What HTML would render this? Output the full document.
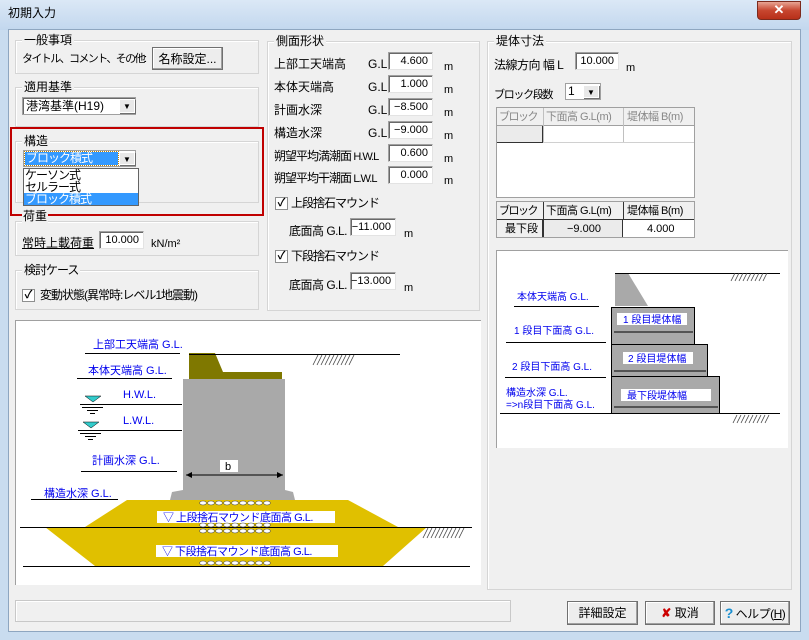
<!DOCTYPE html>
<html><head><meta charset="utf-8"><style>
*{box-sizing:border-box;margin:0;padding:0}
body{width:809px;height:640px;overflow:hidden;background:#c9dcef;font-family:"Liberation Sans","Noto Sans CJK JP",sans-serif;font-size:12px;color:#000;position:relative}
.a{position:absolute}
.t{position:absolute;white-space:nowrap;line-height:14px}
.n{letter-spacing:-1px}
.grp{position:absolute;border:1px solid #d5d5d5;box-shadow:inset 1px 1px 0 #fff}
.gl{position:absolute;top:-8px;left:6px;background:#f0f0f0;padding:0 2px;line-height:14px}
.inp{position:absolute;background:#fff;border:1px solid #a0a0a0;border-right-color:#e3e3e3;border-bottom-color:#e3e3e3;box-shadow:inset 1px 1px 0 #696969;text-align:right;padding-right:4px;line-height:16px;font-size:11px}
.btn{position:absolute;background:#ededed;border:1px solid #707070;box-shadow:inset -1px -1px 0 #a0a0a0,inset 1px 1px 0 #fff;text-align:center;line-height:22px}
.cb{position:absolute;width:13px;height:13px;background:#fff;border:1px solid #8e8f8f;font-size:11px;line-height:11px;text-align:center;font-weight:bold}
.dd{position:absolute;width:16px;background:#e8e8e8;border:1px solid #fff;box-shadow:1px 1px 0 #707070;text-align:center;font-size:8px}
.th{font-size:11px;letter-spacing:-0.5px}
</style></head><body>
<div class="a" style="left:0;top:0;width:809px;height:30px;background:linear-gradient(#dbe8f6,#c2d7ee)"></div>
<div class="t" style="left:8px;top:6px;font-size:12px">初期入力</div>
<div class="a" style="left:757px;top:1px;width:44px;height:19px;border-radius:0 0 4px 4px;background:linear-gradient(#e8a493,#c7462f 50%,#b83019);border:1px solid #7c2a1d;color:#fff;text-align:center;font-weight:bold;font-size:13px;line-height:16px">✕</div>
<div class="a" style="left:8px;top:29px;width:793px;height:603px;background:#f0f0f0;border:1px solid #8ea6c0"></div>

<div class="grp" style="left:15px;top:40px;width:244px;height:34px"><div class="gl">一般事項</div></div>
<div class="t" style="left:22px;top:52px;font-size:11px;letter-spacing:-1.6px">タイトル、コメント、その他:</div>
<div class="btn" style="left:152px;top:47px;width:71px;height:23px">名称設定...</div>

<div class="grp" style="left:15px;top:87px;width:244px;height:40px"><div class="gl">適用基準</div></div>
<div class="a" style="left:22px;top:97px;width:114px;height:18px;background:#fff;border:1px solid #a0a0a0;box-shadow:inset 1px 1px 0 #696969"></div>
<div class="t" style="left:26px;top:99px">港湾基準(H19)</div>
<div class="dd" style="left:119px;top:99px;height:14px;line-height:14px">▼</div>

<div class="grp" style="left:15px;top:141px;width:244px;height:62px"><div class="gl">構造</div></div>
<div class="a" style="left:10px;top:127px;width:254px;height:89px;border:2px solid #c00000"></div>
<div class="a" style="left:23px;top:150px;width:113px;height:17px;background:#fff;border:1px solid #a0a0a0"></div>
<div class="a" style="left:25px;top:152px;width:93px;height:13px;background:#3399ff;outline:1px dotted #c08000"></div>
<div class="t n" style="left:26px;top:151px;color:#fff">ブロック積式</div>
<div class="dd" style="left:119px;top:152px;height:13px;line-height:13px">▼</div>
<div class="a" style="left:23px;top:168px;width:116px;height:38px;background:#fff;border:1px solid #646464"></div>
<div class="t n" style="left:25px;top:168px">ケーソン式</div>
<div class="t n" style="left:25px;top:180px">セルラー式</div>
<div class="a" style="left:24px;top:193px;width:114px;height:12px;background:#3399ff"></div>
<div class="t n" style="left:25px;top:192px;color:#fff">ブロック積式</div>

<div class="grp" style="left:15px;top:221px;width:244px;height:35px"></div>
<div class="t" style="left:22px;top:209px;background:#f0f0f0;padding:0 1px">荷重</div>
<div class="t" style="left:22px;top:236px;text-decoration:underline">常時上載荷重</div>
<div class="inp" style="left:99px;top:231px;width:45px;height:18px">10.000</div>
<div class="t" style="left:151px;top:237px;font-size:11px">kN/m²</div>

<div class="grp" style="left:15px;top:270px;width:244px;height:40px"><div class="gl n">検討ケース</div></div>
<div class="cb" style="left:22px;top:289px">✓</div>
<div class="t n" style="left:40px;top:288px">変動状態(異常時:レベル1地震動)</div>

<div class="grp" style="left:267px;top:41px;width:213px;height:270px"><div class="gl">側面形状</div></div>
<div class="t" style="left:274px;top:57px">上部工天端高</div><div class="t" style="left:368px;top:57px">G.L.</div><div class="inp" style="left:388px;top:52px;width:45px;height:18px">4.600</div><div class="t" style="left:444px;top:60px;font-size:11px">m</div>
<div class="t" style="left:274px;top:80px">本体天端高</div><div class="t" style="left:368px;top:80px">G.L.</div><div class="inp" style="left:388px;top:75px;width:45px;height:18px">1.000</div><div class="t" style="left:444px;top:83px;font-size:11px">m</div>
<div class="t" style="left:274px;top:103px">計画水深</div><div class="t" style="left:368px;top:103px">G.L.</div><div class="inp" style="left:388px;top:98px;width:45px;height:18px">−8.500</div><div class="t" style="left:444px;top:106px;font-size:11px">m</div>
<div class="t" style="left:274px;top:126px">構造水深</div><div class="t" style="left:368px;top:126px">G.L.</div><div class="inp" style="left:388px;top:121px;width:45px;height:18px">−9.000</div><div class="t" style="left:444px;top:129px;font-size:11px">m</div>
<div class="t" style="left:274px;top:149px;letter-spacing:-1px">朔望平均満潮面 <span style="font-size:11px">H.W.L</span></div><div class="inp" style="left:388px;top:144px;width:45px;height:18px">0.600</div><div class="t" style="left:444px;top:152px;font-size:11px">m</div>
<div class="t" style="left:274px;top:171px;letter-spacing:-1px">朔望平均干潮面 <span style="font-size:11px">L.W.L</span></div><div class="inp" style="left:388px;top:166px;width:45px;height:18px">0.000</div><div class="t" style="left:444px;top:174px;font-size:11px">m</div>
<div class="cb" style="left:275px;top:197px">✓</div><div class="t n" style="left:291px;top:196px">上段捨石マウンド</div>
<div class="t" style="left:289px;top:224px;letter-spacing:-0.5px">底面高 G.L.</div><div class="inp" style="left:350px;top:218px;width:46px;height:18px">−11.000</div><div class="t" style="left:404px;top:227px;font-size:11px">m</div>
<div class="cb" style="left:275px;top:250px">✓</div><div class="t n" style="left:291px;top:249px">下段捨石マウンド</div>
<div class="t" style="left:289px;top:278px;letter-spacing:-0.5px">底面高 G.L.</div><div class="inp" style="left:350px;top:272px;width:46px;height:18px">−13.000</div><div class="t" style="left:404px;top:281px;font-size:11px">m</div>

<div class="grp" style="left:487px;top:41px;width:305px;height:549px"><div class="gl">堤体寸法</div></div>
<div class="t" style="left:494px;top:58px;letter-spacing:-0.5px">法線方向 幅 L</div>
<div class="inp" style="left:575px;top:52px;width:44px;height:18px">10.000</div><div class="t" style="left:626px;top:61px;font-size:11px">m</div>
<div class="t" style="left:494px;top:88px;font-size:11px;letter-spacing:-1.3px">ブロック段数</div>
<div class="a" style="left:565px;top:83px;width:36px;height:17px;background:#fff;border:1px solid #a0a0a0"></div>
<div class="t" style="left:568px;top:84px">1</div>
<div class="dd" style="left:583px;top:85px;height:13px;line-height:13px">▼</div>

<div class="a" style="left:496px;top:107px;width:199px;height:91px;background:#fff;border:1px solid #a0a0a0"></div>
<div class="a" style="left:497px;top:108px;width:197px;height:18px;background:#f0f0f0;border-bottom:1px solid #a0a0a0"></div>
<div class="t th" style="left:499px;top:110px;color:#888;letter-spacing:-1.5px">ブロック</div>
<div class="t th" style="left:546px;top:110px;color:#888">下面高 G.L(m)</div>
<div class="t th" style="left:627px;top:110px;color:#888">堤体幅 B(m)</div>
<div class="a" style="left:543px;top:108px;width:1px;height:35px;background:#c0c0c0"></div>
<div class="a" style="left:623px;top:108px;width:1px;height:35px;background:#c0c0c0"></div>
<div class="a" style="left:497px;top:126px;width:46px;height:17px;background:#ebebeb;border-bottom:1px solid #333;border-right:1px solid #333"></div>
<div class="a" style="left:543px;top:142px;width:151px;height:1px;background:#d0d0d0"></div>

<div class="a" style="left:496px;top:201px;width:199px;height:37px;background:#fff;border:1px solid #a0a0a0"></div>
<div class="a" style="left:497px;top:202px;width:197px;height:18px;background:#f0f0f0;border-bottom:1px solid #333"></div>
<div class="t th" style="left:499px;top:204px;letter-spacing:-1.5px">ブロック</div>
<div class="t th" style="left:546px;top:204px">下面高 G.L(m)</div>
<div class="t th" style="left:627px;top:204px">堤体幅 B(m)</div>
<div class="a" style="left:497px;top:220px;width:46px;height:17px;background:#f0f0f0;border-right:1px solid #333"></div>
<div class="a" style="left:544px;top:220px;width:79px;height:17px;background:#ebebeb;border-right:1px solid #333"></div>
<div class="a" style="left:543px;top:202px;width:1px;height:35px;background:#333"></div>
<div class="a" style="left:623px;top:202px;width:1px;height:18px;background:#333"></div>
<div class="t" style="left:505px;top:222px;font-size:11px">最下段</div>
<div class="t" style="left:567px;top:222px;font-size:11px">−9.000</div>
<div class="t" style="left:647px;top:222px;font-size:11px">4.000</div>

<div class="a" style="left:15px;top:320px;width:466px;height:265px;background:#fff;border-left:1px solid #a0a0a0;border-top:1px solid #a0a0a0"></div>
<div class="a" style="left:496px;top:250px;width:292px;height:198px;background:#fff;border-left:1px solid #a0a0a0;border-top:1px solid #a0a0a0"></div>

<svg class="a" style="left:0;top:0" width="809" height="640" viewBox="0 0 809 640" font-family="Liberation Sans, Noto Sans CJK JP, sans-serif">
<defs>
<g id="ov" fill="#fff" stroke="#555" stroke-width=".6"><ellipse cx="203" cy="0" rx="3.4" ry="2"/><ellipse cx="211" cy="0" rx="3.4" ry="2"/><ellipse cx="219" cy="0" rx="3.4" ry="2"/><ellipse cx="227" cy="0" rx="3.4" ry="2"/><ellipse cx="235" cy="0" rx="3.4" ry="2"/><ellipse cx="243" cy="0" rx="3.4" ry="2"/><ellipse cx="251" cy="0" rx="3.4" ry="2"/><ellipse cx="259" cy="0" rx="3.4" ry="2"/><ellipse cx="267" cy="0" rx="3.4" ry="2"/></g>
</defs>
<g fill="#e0c000"><polygon points="127,500 348,500 398,527 85,527"/><polygon points="45,527 427,527 383,566 95,566"/></g>
<polygon points="183,379 285,379 285,490 293,492 295,500 170,500 172,492 183,490" fill="#a9a9a9"/>
<polygon points="189,353 215,353 223,372 282,372 282,379 189,379" fill="#7f7800"/>
<g stroke="#000" stroke-width="1">
<line x1="189" y1="354.5" x2="400" y2="354.5"/><line x1="85" y1="353.5" x2="180" y2="353.5"/>
<line x1="77" y1="378.5" x2="172" y2="378.5"/><line x1="80" y1="404.5" x2="182" y2="404.5"/>
<line x1="78" y1="430.5" x2="182" y2="430.5"/><line x1="81" y1="471.5" x2="177" y2="471.5"/>
<line x1="31" y1="499.5" x2="118" y2="499.5"/><line x1="20" y1="527.5" x2="472" y2="527.5"/>
<line x1="23" y1="566.5" x2="470" y2="566.5"/>
<line x1="186" y1="475" x2="283" y2="475"/>
<line x1="82" y1="407.5" x2="103" y2="407.5"/><line x1="87" y1="410.5" x2="98" y2="410.5"/><line x1="90" y1="413.5" x2="95" y2="413.5"/>
<line x1="80" y1="433.5" x2="101" y2="433.5"/><line x1="85" y1="436.5" x2="96" y2="436.5"/><line x1="88" y1="439.5" x2="93" y2="439.5"/>
</g>
<g stroke="#444" stroke-width="0.8"><path d="M313,365l5,-10M317,365l5,-10M321,365l5,-10M325,365l5,-10M329,365l5,-10M333,365l5,-10M337,365l5,-10M341,365l5,-10M345,365l5,-10M349,365l5,-10"/>
<path d="M423,538l5,-10M427,538l5,-10M431,538l5,-10M435,538l5,-10M439,538l5,-10M443,538l5,-10M447,538l5,-10M451,538l5,-10M455,538l5,-10M459,538l5,-10"/></g>
<polygon points="186,475 192,472 192,478"/><polygon points="283,475 277,472 277,478"/>
<polygon points="85,396 101,396 93,402" fill="#33cccc" stroke="#000" stroke-width=".5"/>
<polygon points="83,422 99,422 91,428" fill="#33cccc" stroke="#000" stroke-width=".5"/>
<rect x="220" y="460" width="18" height="12" fill="#fff"/><text x="225" y="470" font-size="11">b</text>
<rect x="157" y="511" width="178" height="12" fill="#fff"/><rect x="156" y="545" width="182" height="12" fill="#fff"/>
<use href="#ov" y="503"/><use href="#ov" y="525"/><use href="#ov" y="531"/><use href="#ov" y="563"/>
<g fill="#0000ee" font-size="11">
<text x="93" y="348">上部工天端高 G.L.</text><text x="88" y="374">本体天端高 G.L.</text>
<text x="123" y="398">H.W.L.</text><text x="123" y="424">L.W.L.</text>
<text x="92" y="464">計画水深 G.L.</text><text x="44" y="497">構造水深 G.L.</text>
<text x="163" y="521" letter-spacing="-0.5">▽  上段捨石マウンド底面高 G.L.</text><text x="162" y="555" letter-spacing="-0.5">▽  下段捨石マウンド底面高 G.L.</text>
</g>
<g fill="#a9a9a9" stroke="#000" stroke-width="1">
<rect x="611.5" y="376.5" width="108" height="37"/><rect x="611.5" y="344.5" width="96" height="32"/><rect x="611.5" y="307.5" width="83" height="37"/>
</g>
<polygon points="615,273 628,273 648,306 615,306" fill="#a9a9a9"/>
<g stroke="#000"><line x1="615" y1="273.5" x2="780" y2="273.5"/><line x1="500" y1="413.5" x2="780" y2="413.5"/>
<line x1="514" y1="306.5" x2="599" y2="306.5"/><line x1="506" y1="342.5" x2="606" y2="342.5"/><line x1="505" y1="377.5" x2="606" y2="377.5"/>
<line x1="614" y1="332" x2="693" y2="332"/><line x1="614" y1="371" x2="706" y2="371"/><line x1="614" y1="407" x2="718" y2="407"/></g>
<g stroke="#444" stroke-width=".8"><path d="M731,281l4,-8M735,281l4,-8M739,281l4,-8M743,281l4,-8M747,281l4,-8M751,281l4,-8M755,281l4,-8M759,281l4,-8M763,281l4,-8"/>
<path d="M733,423l4,-8M737,423l4,-8M741,423l4,-8M745,423l4,-8M749,423l4,-8M753,423l4,-8M757,423l4,-8M761,423l4,-8M765,423l4,-8"/></g>
<g fill="#fff"><rect x="617" y="313" width="70" height="12"/><rect x="623" y="352" width="70" height="12"/><rect x="621" y="389" width="90" height="12"/></g>
<g fill="#0000ee" font-size="10">
<text x="623" y="323">1 段目堤体幅</text><text x="628" y="362">2 段目堤体幅</text><text x="627" y="399">最下段堤体幅</text>
<text x="517" y="300">本体天端高 G.L.</text><text x="514" y="334">1 段目下面高 G.L.</text><text x="512" y="370">2 段目下面高 G.L.</text>
<text x="506" y="396">構造水深 G.L.</text><text x="506" y="408">=&gt;n段目下面高 G.L.</text>
</g>
</svg>

<div class="a" style="left:15px;top:600px;width:496px;height:22px;border:1px solid #c8c8c8;box-shadow:inset 1px 1px 0 #fff"></div>
<div class="btn" style="left:567px;top:601px;width:71px;height:24px">詳細設定</div>
<div class="btn" style="left:645px;top:601px;width:70px;height:24px"><span style="color:#c00;font-weight:bold">✘</span> 取消</div>
<div class="btn" style="left:720px;top:601px;width:70px;height:24px;letter-spacing:-0.5px"><span style="color:#1a8fd0;font-weight:bold;font-size:14px">?</span> ヘルプ(<u>H</u>)</div>
</body></html>
